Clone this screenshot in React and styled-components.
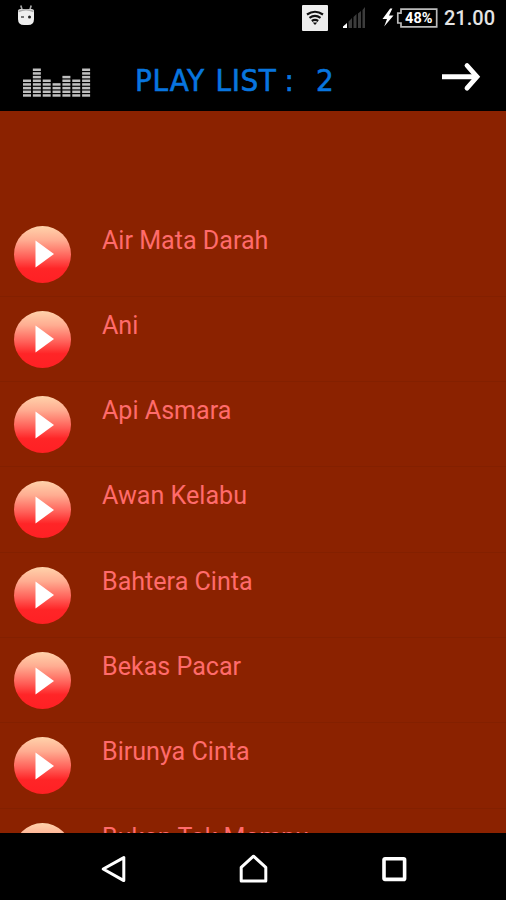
import styled, { createGlobalStyle } from "styled-components";

const songs = [
  "Air Mata Darah",
  "Ani",
  "Api Asmara",
  "Awan Kelabu",
  "Bahtera Cinta",
  "Bekas Pacar",
  "Birunya Cinta",
  "Bukan Tak Mampu",
];

const levels = [5, 8, 5, 4, 6, 5, 8];

export default function App() {
  return (
    <Screen>
      <GlobalStyle />
      <StatusBar>
        <RobotIcon />
        <StatusRight>
          <WifiIcon />
          <SignalIcon />
          <BatteryIcon />
          <Clock>21.00</Clock>
        </StatusRight>
      </StatusBar>
      <Header>
        <Equalizer />
        <Title>
          <Word $width={80.5} $spacing={0.8}>PLAY</Word>
          <Word $width={69} $spacing={0.6}>LIST</Word>
          <Word $width={31.5} $spacing={0}>:</Word>
          <Word $width={20} $spacing={0}>2</Word>
        </Title>
        <ArrowIcon />
      </Header>
      <List>
        {songs.map((song) => (
          <Row key={song}>
            <PlayButton>
              <PlayIcon />
            </PlayButton>
            <Song>{song}</Song>
          </Row>
        ))}
      </List>
      <NavBar>
        <svg width="28" height="30" viewBox="0 0 28 30">
          <path d="M23.8 3.6V26.6L3.2 15Z" fill="none" stroke="#fff" strokeWidth="3" strokeLinejoin="round" />
        </svg>
        <svg width="30" height="30" viewBox="0 0 30 30">
          <path d="M2.2 13.4L14.5 2.2L26.8 13.4V27H2.2Z" fill="none" stroke="#fff" strokeWidth="3" strokeLinejoin="round" />
        </svg>
        <svg width="28" height="30" viewBox="0 0 28 30">
          <rect x="4" y="4.8" width="20.6" height="20.6" rx="1" fill="none" stroke="#fff" strokeWidth="3.6" />
        </svg>
      </NavBar>
    </Screen>
  );
}

function RobotIcon() {
  return (
    <svg width="18" height="22" viewBox="0 0 18 22">
      <path d="M3.8 1.5L5.2 6M14.2 1.5L12.8 6" stroke="#aaa" strokeWidth="1.6" />
      <path d="M1 7Q1 5 4 5H14Q17 5 17 7V15Q17 21 11 21H7Q1 21 1 15Z" fill="#eee" />
      <path d="M1.5 7.5Q9 4 16.5 7.5" stroke="#aaa" strokeWidth="1.6" fill="none" />
      <path d="M4 13H7" stroke="#777" strokeWidth="2" />
      <circle cx="12.5" cy="13" r="1.5" fill="#222" />
    </svg>
  );
}

function WifiIcon() {
  return (
    <svg width="26" height="26" viewBox="0 0 26 26">
      <rect width="26" height="26" rx="1" fill="#eee" />
      <path d="M5 9.5Q13 4 21 9.5M7.5 12.8Q13 9 18.5 12.8M9.8 16Q13 13.8 16.2 16" fill="none" stroke="#111" strokeWidth="2.2" />
      <path d="M10.7 17.5H15.3L13 20Z" fill="#111" />
    </svg>
  );
}

function SignalIcon() {
  return (
    <svg width="24" height="22" viewBox="0 0 24 22">
      <path d="M0 21V19.5L4 16V21Z" fill="#fff" />
      <path d="M5.5 21V14.5L9 11V21ZM10.5 21V10L13.5 7V21ZM15 21V6.5L18 4V21ZM19.5 21V3L22 0V21Z" fill="#3c3c3c" />
    </svg>
  );
}

function BatteryIcon() {
  return (
    <svg width="56" height="22" viewBox="0 0 56 22">
      <path d="M8.2 1.5L0.5 12H5L2.2 19.5L11.5 8.5H7L10.4 1.5Z" fill="#fff" />
      <path d="M19 2.2H54.7V19.8H19V16H15.8V6.2H19Z" fill="none" stroke="#bbb" strokeWidth="1.7" />
      <BatteryText x="36.8" y="16">48%</BatteryText>
    </svg>
  );
}

function Equalizer() {
  return (
    <svg width="68" height="62" viewBox="0 0 68 62">
      {levels.map((level, i) =>
        Array.from({ length: level }, (_, n) => (
          <rect key={`${i}-${n}`} x={i * 9.85} y={59.2 - n * 3.67} width="8" height="2.5" fill="#c0c0c0" />
        ))
      )}
    </svg>
  );
}

function ArrowIcon() {
  return (
    <ArrowSvg width="40" height="30" viewBox="0 0 40 30">
      <path d="M0 14.8H34" fill="none" stroke="#fff" strokeWidth="5" />
      <path d="M25 3.5L35 14.8L25 26.1" fill="none" stroke="#fff" strokeWidth="4.8" strokeLinecap="round" />
    </ArrowSvg>
  );
}

function PlayIcon() {
  return (
    <svg width="19" height="28" viewBox="0 0 19 28">
      <path d="M0.5 0.5L19 14L0.5 27.5Z" fill="#fff" />
    </svg>
  );
}

const GlobalStyle = createGlobalStyle`
  body {
    margin: 0;
    background: #000;
  }
  * {
    box-sizing: border-box;
  }
  svg {
    display: block;
    flex-shrink: 0;
  }
`;

const Screen = styled.div`
  width: 506px;
  height: 900px;
  display: flex;
  flex-direction: column;
  overflow: hidden;
  background: #000;
  font-family: Roboto, "Liberation Sans", sans-serif;
`;

const StatusBar = styled.div`
  height: 35px;
  flex-shrink: 0;
  padding: 4px 11px 0 17px;
  display: flex;
  justify-content: space-between;
  align-items: flex-start;
`;

const StatusRight = styled.div`
  display: flex;
  align-items: center;

  & > svg:nth-child(1) {
    margin-right: 15px;
  }
  & > svg:nth-child(2) {
    margin-right: 15px;
  }
`;

const BatteryText = styled.text`
  fill: #fff;
  font-size: 14.5px;
  font-weight: 700;
  text-anchor: middle;
`;

const Clock = styled.span`
  width: 51px;
  margin-left: 6px;
  font-size: 20px;
  font-weight: 500;
  line-height: 28px;
  white-space: nowrap;
  color: #e4e4e4;
`;

const Header = styled.header`
  height: 76px;
  flex-shrink: 0;
  padding: 0 24px 0 23px;
  display: flex;
  align-items: flex-start;
`;

const ArrowSvg = styled.svg`
  margin-top: 27px;
`;

const Title = styled.h1`
  margin: 27px 0 0 44px;
  flex: 1;
  display: flex;
  font-family: "DejaVu Sans Condensed", "DejaVu Sans", sans-serif;
  font-stretch: condensed;
  font-size: 31px;
  font-weight: 400;
  line-height: 36px;
  color: #0875df;
  -webkit-text-stroke: 0.6px #0875df;
`;

const Word = styled.span`
  width: ${({ $width }) => $width}px;
  letter-spacing: ${({ $spacing }) => $spacing}px;
  white-space: nowrap;
`;

const List = styled.main`
  flex: 1;
  min-height: 0;
  padding-top: 100.6px;
  overflow: hidden;
  background: #8b2200;
`;

const Row = styled.div`
  height: 85.3px;
  padding: 14px 14px 0;
  display: flex;
  align-items: flex-start;
  border-bottom: 1px solid #832000;
`;

const PlayButton = styled.div`
  width: 57px;
  height: 57px;
  padding-left: 4px;
  display: flex;
  align-items: center;
  justify-content: center;
  flex-shrink: 0;
  border-radius: 50%;
  background: linear-gradient(#ffd3ab 0%, #ffac91 25%, #ff5e57 55%, #ff2527 75%, #ff2024 100%);
`;

const Song = styled.span`
  margin-left: 31px;
  font-size: 25.1px;
  line-height: 29px;
  white-space: nowrap;
  color: #ff6b6b;
`;

const NavBar = styled.nav`
  height: 67px;
  flex-shrink: 0;
  padding: 21px 98px 0 100px;
  display: flex;
  justify-content: space-between;
  align-items: flex-start;
`;
